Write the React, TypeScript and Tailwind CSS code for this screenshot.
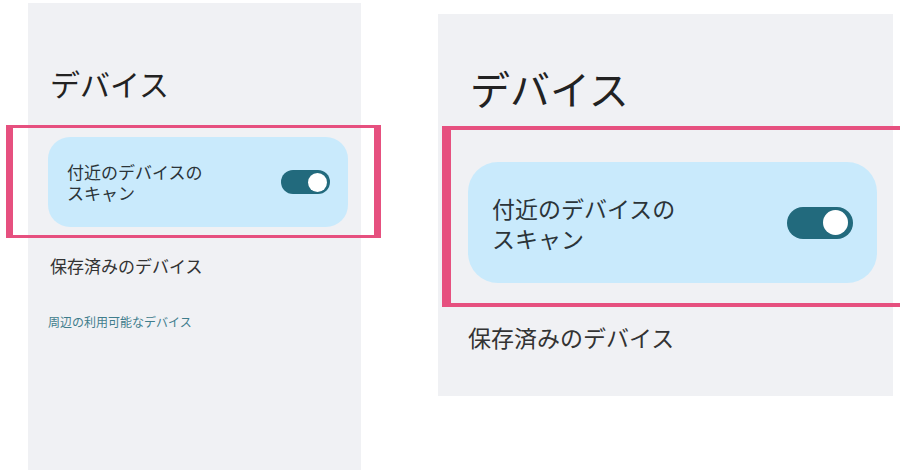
import React from "react";

const font = { fontFamily: '"Noto Sans CJK JP", "Noto Sans", sans-serif' };

type ToggleProps = { big?: boolean };

const Toggle = ({ big }: ToggleProps) => (
  <div
    className={
      big
        ? "flex h-[32px] w-[66px] shrink-0 items-center justify-end rounded-full bg-[#226a7d] pr-[5px]"
        : "flex h-[24px] w-[49px] shrink-0 items-center justify-end rounded-full bg-[#226a7d] pr-[3px]"
    }
  >
    <div
      className={
        big
          ? "h-[25px] w-[25px] rounded-full bg-white"
          : "h-[19px] w-[19px] rounded-full bg-white"
      }
    />
  </div>
);

// small phone screen
const SmallScreen = () => (
  <div className="relative">
    <div className="ml-[28px] mt-[3px] flex h-[467px] w-[333px] flex-col bg-[#f0f1f4]">
      <div className="mt-[62px] pl-[22px] text-[30px] leading-[36px] text-[#222]">
        デバイス
      </div>
      <div className="ml-[20px] mt-[36px] flex h-[90px] w-[300px] items-center justify-between rounded-[22px] bg-[#c9eafc] pl-[19px] pr-[18px]">
        <div className="flex flex-col text-[17px] leading-[21px] text-[#2b3439]">
          <span>付近のデバイスの</span>
          <span>スキャン</span>
        </div>
        <Toggle />
      </div>
      <div className="mt-[27px] pl-[22px] text-[17px] leading-[24px] text-[#333]">
        保存済みのデバイス
      </div>
      <div className="mt-[36px] pl-[20px] text-[12px] leading-[16px] text-[#3f7d8c]">
        周辺の利用可能なデバイス
      </div>
    </div>
    {/* highlight frame */}
    <div className="absolute left-[6px] top-[125px] h-[113px] w-[375px] border-x-[7px] border-y-[3px] border-[#e6507f]" />
  </div>
);

// enlarged crop
const LargeScreen = () => (
  <div className="relative">
    <div className="ml-[77px] mt-[14px] flex h-[382px] w-[455px] flex-col bg-[#f0f1f4]">
      <div className="mt-[50px] pl-[32px] text-[40px] leading-[48px] text-[#222]">
        デバイス
      </div>
      <div className="ml-[30px] mt-[50px] flex h-[121px] w-[409px] items-center justify-between rounded-[30px] bg-[#c9eafc] pl-[24px] pr-[24px]">
        <div className="flex flex-col text-[23px] leading-[30px] text-[#2b3439]">
          <span>付近のデバイスの</span>
          <span>スキャン</span>
        </div>
        <Toggle big />
      </div>
      <div className="mt-[39px] pl-[30px] text-[23px] leading-[30px] text-[#333]">
        保存済みのデバイス
      </div>
    </div>
    <div className="absolute left-[81px] top-[126px] h-[181px] w-[460px] border-y-[4px] border-l-[9px] border-[#e6507f]" />
  </div>
);

export default function App() {
  return (
    <div className="flex h-[472px] w-[900px] overflow-hidden bg-white" style={font}>
      <SmallScreen />
      <LargeScreen />
    </div>
  );
}
